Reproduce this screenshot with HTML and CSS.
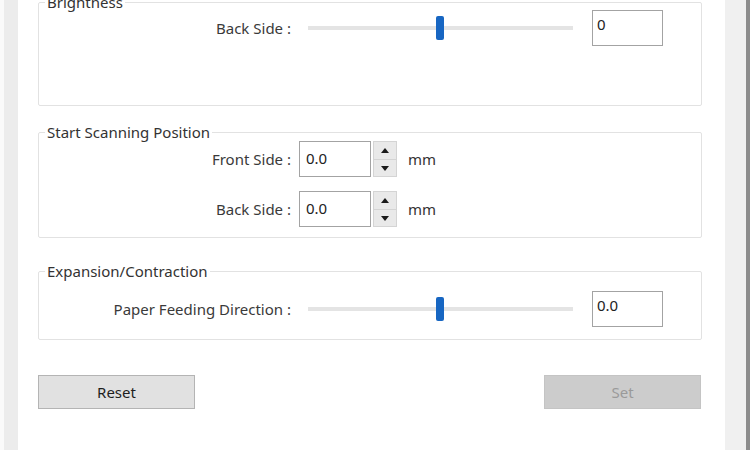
FILE: index.html
```html
<!DOCTYPE html>
<html>
<head>
<meta charset="utf-8">
<link rel="stylesheet" href="styles.css">
</head>
<body>
<div class="window">
  <div class="edge-left"><div class="edge-a"></div><div class="edge-b"></div></div>
  <div class="content">
    <fieldset class="group g1">
      <legend>Brightness</legend>
      <div class="row slider-row">
        <span class="label">Back Side :</span>
        <div class="slider"><div class="track"></div><div class="thumb"></div></div>
        <div class="field">0</div>
      </div>
    </fieldset>

    <fieldset class="group g2">
      <legend>Start Scanning Position</legend>
      <div class="row spin-row">
        <span class="label">Front Side :</span>
        <div class="field wide">0.0</div>
        <div class="spinner"><span class="up"></span><span class="down"></span></div>
        <span class="unit">mm</span>
      </div>
      <div class="row spin-row second">
        <span class="label">Back Side :</span>
        <div class="field wide">0.0</div>
        <div class="spinner"><span class="up"></span><span class="down"></span></div>
        <span class="unit">mm</span>
      </div>
    </fieldset>

    <fieldset class="group g3">
      <legend>Expansion/Contraction</legend>
      <div class="row slider-row">
        <span class="label">Paper Feeding Direction :</span>
        <div class="slider"><div class="track"></div><div class="thumb"></div></div>
        <div class="field">0.0</div>
      </div>
    </fieldset>

    <div class="buttons">
      <button class="btn">Reset</button>
      <button class="btn disabled">Set</button>
    </div>
  </div>
  <div class="edge-right"><div class="edge-c"></div><div class="edge-d"></div></div>
</div>
</body>
</html>
```

FILE: styles.css
```css
html, body {
  margin: 0;
  padding: 0;
  background: #ffffff;
  overflow: hidden;
}
body {
  font-family: "Noto Sans", "Open Sans", sans-serif;
  font-size: 15px;
  color: #3a3a3a;
}
.window {
  display: flex;
  width: 750px;
  height: 450px;
}
.edge-left, .edge-right {
  display: flex;
  flex: none;
}
.edge-a { width: 4px; background: #fafafa; }
.edge-b { width: 14px; background: #ececec; }
.edge-c { width: 21px; background: #f0f0f0; }
.edge-d { width: 4px; background: #8c8c8c; }
.content {
  flex: 1;
  padding: 0 23px 0 20px;
  margin-top: -6px;
}
.group {
  margin: 0;
  padding: 0;
  border: 1px solid #e2e2e2;
  border-radius: 2px;
  min-width: 0;
}
.group legend {
  margin-left: 6px;
  padding: 0 2px;
  line-height: 16px;
  color: #333333;
}
.g1 { padding-bottom: 59px; }
.g2 { margin-top: 18px; padding-top: 1px; padding-bottom: 10px; }
.g3 { margin-top: 25px; padding-top: 12px; padding-bottom: 12px; }

.row {
  display: flex;
  align-items: center;
  height: 36px;
}
.label {
  width: 252px;
  text-align: right;
  flex: none;
}
.slider {
  position: relative;
  width: 265px;
  height: 28px;
  margin-left: 17px;
  flex: none;
  display: flex;
  align-items: center;
}
.track {
  width: 100%;
  height: 4px;
  background: #e4e4e4;
}
.thumb {
  position: absolute;
  left: 128px;
  top: 2px;
  width: 8px;
  height: 24px;
  background: #1766c2;
  border-radius: 2px;
}
.field {
  margin-left: 19px;
  border: 1px solid #a3a3a3;
  padding: 0 0 0 4px;
  line-height: 26px;
  color: #222222;
  flex: none;
  box-sizing: border-box;
  width: 71px;
  height: 36px;
}
.field.wide {
  margin-left: 8px;
  width: 72px;
  padding-left: 6px;
  line-height: 32px;
}
.second { margin-top: 14px; }
.spinner {
  margin-left: 2px;
  width: 24px;
  height: 36px;
  display: flex;
  flex-direction: column;
  flex: none;
  box-sizing: border-box;
  border: 1px solid #d4d4d4;
  background: #e9e9e9;
}
.spinner span {
  flex: 1;
  position: relative;
}
.spinner .up { border-bottom: 1px solid #d4d4d4; }
.spinner .up::after, .spinner .down::after {
  content: "";
  position: absolute;
  left: 7px;
  top: 6px;
  border-left: 4px solid transparent;
  border-right: 4px solid transparent;
}
.spinner .up::after { border-bottom: 5px solid #1a1a1a; }
.spinner .down::after { border-top: 5px solid #1a1a1a; top: 6px; }
.unit {
  margin-left: 11px;
  color: #333333;
}
.buttons {
  display: flex;
  justify-content: space-between;
  margin-top: 35px;
  padding-right: 1px;
}
.btn {
  width: 157px;
  height: 34px;
  font-family: "Noto Sans", "Open Sans", sans-serif;
  font-size: 15px;
  color: #1e1e1e;
  background: #e1e1e1;
  border: 1px solid #b4b4b4;
  padding: 0;
}
.btn.disabled {
  background: #cccccc;
  border-color: #c4c4c4;
  color: #9a9a9a;
}
```
